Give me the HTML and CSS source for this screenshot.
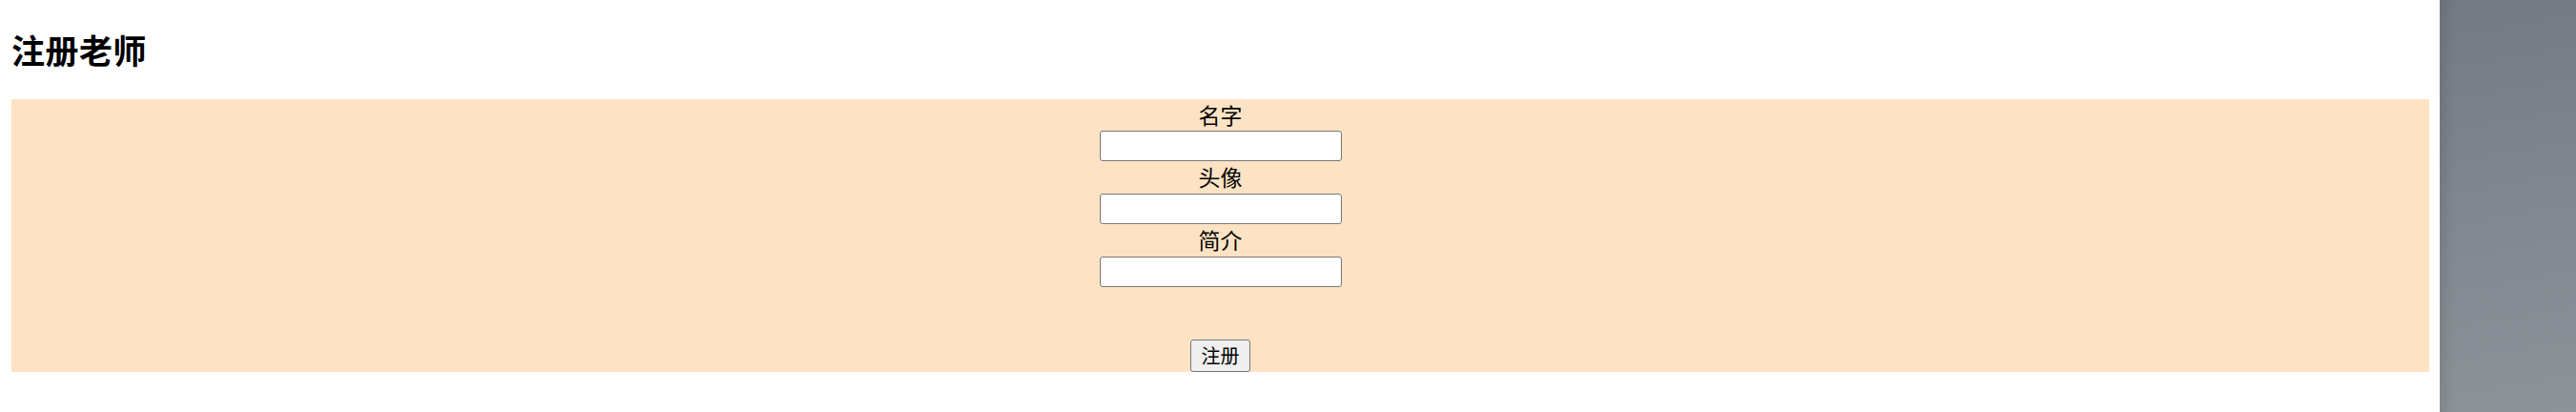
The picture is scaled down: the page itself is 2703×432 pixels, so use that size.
FILE: index.html
```html
<!DOCTYPE html>
<html lang="zh">
<head>
<meta charset="utf-8">
<title>注册老师</title>
<link rel="stylesheet" href="styles.css">
</head>
<body>
<div class="page">
  <main class="main">
    <h2 class="title">注册老师</h2>
    <form class="form">
      <label class="label" for="name">名字</label>
      <input class="field" id="name" type="text">
      <label class="label" for="avatar">头像</label>
      <input class="field" id="avatar" type="text">
      <label class="label" for="intro">简介</label>
      <input class="field" id="intro" type="text">
      <div class="spacer"></div>
      <button class="submit" type="button">注册</button>
    </form>
  </main>
  <aside class="side"></aside>
</div>
</body>
</html>
```
FILE: styles.css
```css
html, body {
  margin: 0;
  padding: 0;
  background: #fff;
}
body {
  font-family: "Noto Sans CJK SC", "Noto Sans", sans-serif;
  color: #000;
}
.page {
  display: flex;
  width: 2703px;
  height: 432px;
  overflow: hidden;
}
.main {
  width: 2560px;
  flex: 0 0 2560px;
  box-sizing: border-box;
  padding: 0 11px 0 12px;
}
.title {
  margin: 0;
  padding-top: 31px;
  height: 73px;
  box-sizing: border-box;
  font-size: 35px;
  line-height: 42px;
  font-weight: 700;
  letter-spacing: 0.5px;
}
.form {
  margin-top: 31px;
  background: #fde3c4;
  height: 286px;
  display: flex;
  flex-direction: column;
  align-items: center;
}
.label {
  display: block;
  height: 33px;
  font-size: 23px;
  line-height: 33px;
}
.label + .field + .label {
  height: 34px;
}
.field {
  width: 254px;
  height: 32px;
  box-sizing: border-box;
  margin: 0;
  border: 1.5px solid #767676;
  border-radius: 3px;
  background: #fff;
}
.spacer {
  height: 55px;
  flex: 0 0 55px;
}
.submit {
  width: 63px;
  height: 34px;
  box-sizing: border-box;
  margin: 0;
  padding: 0;
  border: 1.5px solid #767676;
  border-radius: 3px;
  background: #efefef;
  font-family: "Noto Sans CJK SC", sans-serif;
  font-size: 20px;
  line-height: 30px;
  color: #000;
}
.side {
  flex: 0 0 143px;
  height: 432px;
  background:
    linear-gradient(to right, rgba(0,0,0,0.08) 0, rgba(0,0,0,0.03) 10px, rgba(0,0,0,0) 16px),
    linear-gradient(170deg, #737a82 0%, #808790 50%, #8c9399 100%);
}
```
